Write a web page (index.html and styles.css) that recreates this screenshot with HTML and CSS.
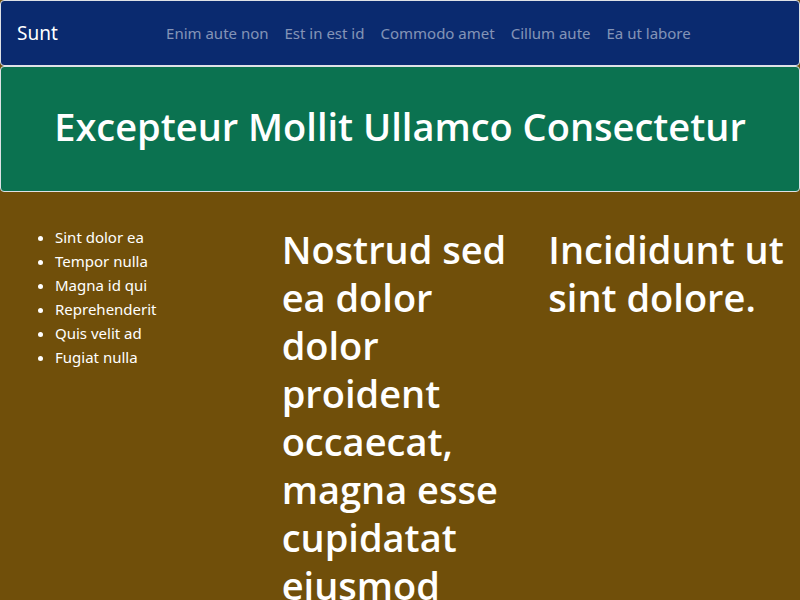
FILE: index.html
```html
<!DOCTYPE html>
<html lang="en">
<head>
<meta charset="utf-8">
<meta name="viewport" content="width=device-width, initial-scale=1">
<title>Sunt</title>
<link rel="stylesheet" href="styles.css">
</head>
<body>
<nav class="navbar panel">
  <a class="brand" href="#">Sunt</a>
  <ul class="nav-list">
    <li><a class="nav-link" href="#">Enim aute non</a></li>
    <li><a class="nav-link" href="#">Est in est id</a></li>
    <li><a class="nav-link" href="#">Commodo amet</a></li>
    <li><a class="nav-link" href="#">Cillum aute</a></li>
    <li><a class="nav-link" href="#">Ea ut labore</a></li>
  </ul>
</nav>
<header class="hero panel">
  <h1 class="heading">Excepteur Mollit Ullamco Consectetur</h1>
</header>
<main class="columns">
  <section class="column">
    <ul class="list">
      <li>Sint dolor ea</li>
      <li>Tempor nulla</li>
      <li>Magna id qui</li>
      <li>Reprehenderit</li>
      <li>Quis velit ad</li>
      <li>Fugiat nulla</li>
    </ul>
  </section>
  <section class="column">
    <h1 class="heading">Nostrud sed ea dolor dolor proident occaecat, magna esse cupidatat eiusmod</h1>
  </section>
  <section class="column">
    <h1 class="heading">Incididunt ut sint dolore.</h1>
  </section>
</main>
</body>
</html>
```
FILE: styles.css
```css
*,
*::before,
*::after {
  box-sizing: border-box;
}

html {
  scrollbar-width: none;
}

body {
  margin: 0;
  background: #704f0a;
  color: #fff;
  font-family: "Segoe UI", "Noto Sans", "Open Sans", sans-serif;
  font-size: 15px;
  line-height: 24px;
}

.panel {
  border: 1px solid #dee2e6;
  border-radius: 4px;
}

.navbar {
  display: flex;
  align-items: center;
  padding: 12px 16px;
  background: #0a2a6f;
}

.brand {
  margin-right: 16px;
  color: #fff;
  font-size: 19px;
  line-height: 30px;
  text-decoration: none;
}

.nav-list {
  display: flex;
  margin: 0 auto;
  padding: 0;
  list-style: none;
}

.nav-link {
  display: block;
  padding: 8px;
  color: rgba(255, 255, 255, 0.5);
  text-decoration: none;
}

.hero {
  padding: 35px 16px 41px;
  background: #0b7250;
  text-align: center;
}

.heading {
  margin: 0;
  font-family: "Segoe UI", "Open Sans", "Noto Sans", sans-serif;
  font-size: 38px;
  font-weight: 600;
  line-height: 48px;
}

.columns {
  display: grid;
  grid-template-columns: repeat(3, minmax(0, 1fr));
  padding-top: 33px;
}

.column {
  padding: 0 15px;
}

.list {
  margin: 0;
  padding-left: 40px;
}
```
